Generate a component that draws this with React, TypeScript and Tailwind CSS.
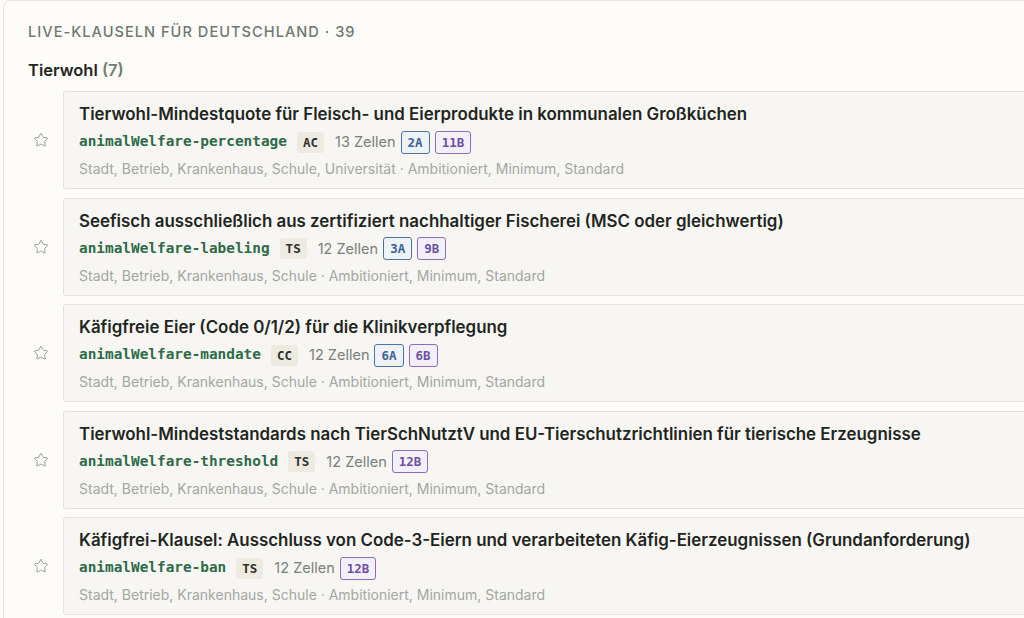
import { Star } from 'lucide-react';

type Tag = { label: string; kind: 'a' | 'b' };

interface Clause {
  title: string;
  id: string;
  type: string;
  cells: number;
  tags: Tag[];
  meta: string;
}

const clauses: Clause[] = [
  {
    title: 'Tierwohl-Mindestquote für Fleisch- und Eierprodukte in kommunalen Großküchen',
    id: 'animalWelfare-percentage',
    type: 'AC',
    cells: 13,
    tags: [
      { label: '2A', kind: 'a' },
      { label: '11B', kind: 'b' },
    ],
    meta: 'Stadt, Betrieb, Krankenhaus, Schule, Universität · Ambitioniert, Minimum, Standard',
  },
  {
    title: 'Seefisch ausschließlich aus zertifiziert nachhaltiger Fischerei (MSC oder gleichwertig)',
    id: 'animalWelfare-labeling',
    type: 'TS',
    cells: 12,
    tags: [
      { label: '3A', kind: 'a' },
      { label: '9B', kind: 'b' },
    ],
    meta: 'Stadt, Betrieb, Krankenhaus, Schule · Ambitioniert, Minimum, Standard',
  },
  {
    title: 'Käfigfreie Eier (Code 0/1/2) für die Klinikverpflegung',
    id: 'animalWelfare-mandate',
    type: 'CC',
    cells: 12,
    tags: [
      { label: '6A', kind: 'a' },
      { label: '6B', kind: 'b' },
    ],
    meta: 'Stadt, Betrieb, Krankenhaus, Schule · Ambitioniert, Minimum, Standard',
  },
  {
    title: 'Tierwohl-Mindeststandards nach TierSchNutztV und EU-Tierschutzrichtlinien für tierische Erzeugnisse',
    id: 'animalWelfare-threshold',
    type: 'TS',
    cells: 12,
    tags: [{ label: '12B', kind: 'b' }],
    meta: 'Stadt, Betrieb, Krankenhaus, Schule · Ambitioniert, Minimum, Standard',
  },
  {
    title: 'Käfigfrei-Klausel: Ausschluss von Code-3-Eiern und verarbeiteten Käfig-Eierzeugnissen (Grundanforderung)',
    id: 'animalWelfare-ban',
    type: 'TS',
    cells: 12,
    tags: [{ label: '12B', kind: 'b' }],
    meta: 'Stadt, Betrieb, Krankenhaus, Schule · Ambitioniert, Minimum, Standard',
  },
];

const mono = "font-['DejaVu_Sans_Mono','Liberation_Mono',monospace]";

function ClauseRow({ clause }: { clause: Clause }) {
  return (
    <div className="flex items-center">
      <div className="w-[35px] pl-[5px] flex items-center">
        <Star size={16} strokeWidth={1.3} className="text-[#8b908b]" />
      </div>
      <div className="flex-1 bg-[#f7f6f2] border border-[#e7e2d7] rounded-[3px] pl-[15px] pt-[12px] pb-[10px]">
        <div className="text-[16.9px] leading-5 font-semibold text-[#1f2622] whitespace-nowrap">
          {clause.title}
        </div>
        <div className="flex items-center h-6 mt-[6px] whitespace-nowrap">
          <span className={`${mono} font-bold text-[14.4px] text-[#2e6a47]`}>{clause.id}</span>
          <span
            className={`${mono} font-bold text-[12.5px] text-[#2a2f2b] bg-[#eeeadf] rounded-[3px] px-[6px] h-[21px] leading-[21px] ml-[10px]`}
          >
            {clause.type}
          </span>
          <span className="text-[14.5px] text-[#7a807b] ml-[11px]">{clause.cells} Zellen</span>
          <div className="flex items-center gap-[5px] ml-[5px]">
            {clause.tags.map((t) => (
              <span
                key={t.label}
                className={`${mono} font-bold text-[12.5px] h-[23px] leading-[21px] px-[6px] rounded-[3px] border ${
                  t.kind === 'a'
                    ? 'border-[#4c74a6] bg-[#eef3f8] text-[#3d6396]'
                    : 'border-[#8c6db8] bg-[#f4f0f9] text-[#6c50a2]'
                }`}
              >
                {t.label}
              </span>
            ))}
          </div>
        </div>
        <div className="text-[14px] leading-[18px] text-[#a3a7a2] mt-[6px] whitespace-nowrap">
          {clause.meta}
        </div>
      </div>
    </div>
  );
}

export default function App() {
  return (
    <div className="h-[618px] w-full overflow-hidden bg-[#fdfcf8] font-['Inter','Liberation_Sans',sans-serif]">
      <div className="ml-[3px] w-[1090px] min-h-[700px] border-l border-t border-[#ebe7de] rounded-tl-lg bg-[#fdfcf8] pl-6 pt-[21px]">
        <h2 className="text-[14.6px] leading-5 font-medium tracking-[0.07em] uppercase text-[#6f7872]">
          Live-Klauseln für Deutschland · 39
        </h2>
        <h3 className="mt-[17px] text-[16.5px] leading-[22px] font-semibold text-[#1f2622]">
          Tierwohl <span className="text-[#737a75]">(7)</span>
        </h3>
        <div className="mt-[10px] flex flex-col gap-[8.5px]">
          {clauses.map((c) => (
            <ClauseRow key={c.id} clause={c} />
          ))}
        </div>
      </div>
    </div>
  );
}
